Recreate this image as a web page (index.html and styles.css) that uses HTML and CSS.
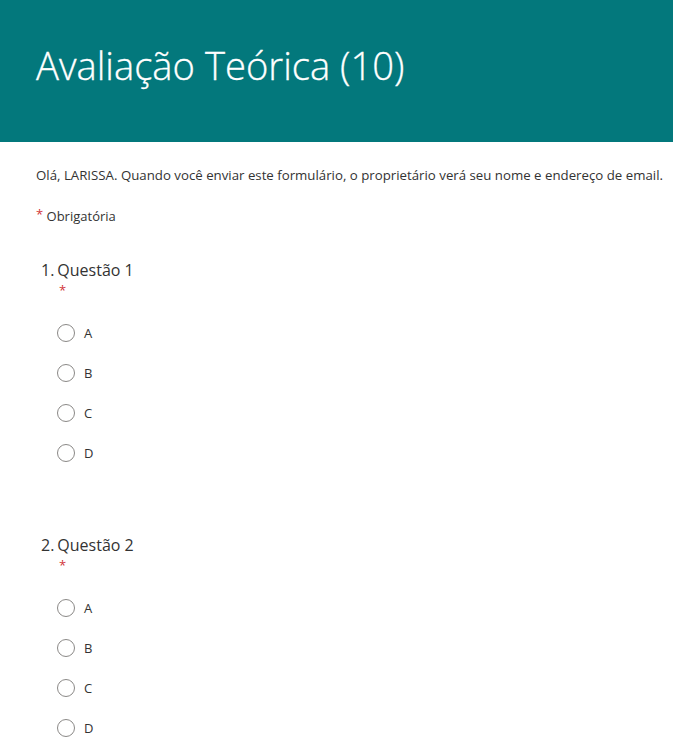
FILE: index.html
```html
<!DOCTYPE html>
<html lang="pt">
<head>
<meta charset="utf-8">
<title>Avaliação Teórica (10)</title>
<link rel="stylesheet" href="styles.css">
</head>
<body>
<header class="banner">
  <h1 class="title">Avaliação Teórica (10)</h1>
</header>
<main class="form">
  <p class="intro">Olá, LARISSA. Quando você enviar este formulário, o proprietário verá seu nome e endereço de email.</p>
  <p class="required-note"><span class="star">*</span> Obrigatória</p>

  <section class="question">
    <div class="q-title"><span class="q-num">1.</span><span class="q-text">Questão 1</span></div>
    <div class="q-star">*</div>
    <ul class="options">
      <li class="option"><span class="radio"></span><span class="label">A</span></li>
      <li class="option"><span class="radio"></span><span class="label">B</span></li>
      <li class="option"><span class="radio"></span><span class="label">C</span></li>
      <li class="option"><span class="radio"></span><span class="label">D</span></li>
    </ul>
  </section>

  <section class="question">
    <div class="q-title"><span class="q-num">2.</span><span class="q-text">Questão 2</span></div>
    <div class="q-star">*</div>
    <ul class="options">
      <li class="option"><span class="radio"></span><span class="label">A</span></li>
      <li class="option"><span class="radio"></span><span class="label">B</span></li>
      <li class="option"><span class="radio"></span><span class="label">C</span></li>
      <li class="option"><span class="radio"></span><span class="label">D</span></li>
    </ul>
  </section>
</main>
</body>
</html>
```

FILE: styles.css
```css
html, body {
  margin: 0;
  padding: 0;
  background: #ffffff;
}
body {
  font-family: "Open Sans", "Noto Sans", "Liberation Sans", sans-serif;
  color: #333333;
  overflow: hidden;
}
.banner {
  height: 142px;
  background: #03787c;
  box-sizing: border-box;
  padding-left: 36px;
  padding-top: 41px;
}
.title {
  margin: 0;
  font-size: 38.2px;
  line-height: 48px;
  font-weight: 300;
  color: #ffffff;
  letter-spacing: 0;
  -webkit-text-stroke: 0.3px #ffffff;
}
.form {
  padding-left: 36px;
}
.intro {
  margin: 23px 0 0 0;
  font-size: 13.25px;
  line-height: 20px;
  white-space: nowrap;
}
.required-note {
  margin: 21px 0 0 0;
  font-size: 13px;
  line-height: 20px;
}
.star {
  color: #d13438;
  font-size: 13px;
  position: relative;
  top: -2px;
}
.question {
  padding-left: 5px;
  margin-top: 32px;
}
.question + .question {
  margin-top: 60px;
}
.q-title {
  display: flex;
  gap: 3px;
  font-size: 16px;
  line-height: 24px;
  color: #333333;
}
.q-star {
  padding-left: 18px;
  color: #d13438;
  font-size: 13px;
  line-height: 16px;
}
.options {
  list-style: none;
  margin: 15px 0 0 0;
  padding: 0 0 0 16px;
}
.option {
  display: flex;
  align-items: center;
  height: 40px;
}
.radio {
  width: 18px;
  height: 18px;
  box-sizing: border-box;
  border: 1px solid #8a8886;
  border-radius: 50%;
  background: #ffffff;
  flex: none;
}
.label {
  margin-left: 9px;
  font-size: 13px;
  color: #333333;
}
```
